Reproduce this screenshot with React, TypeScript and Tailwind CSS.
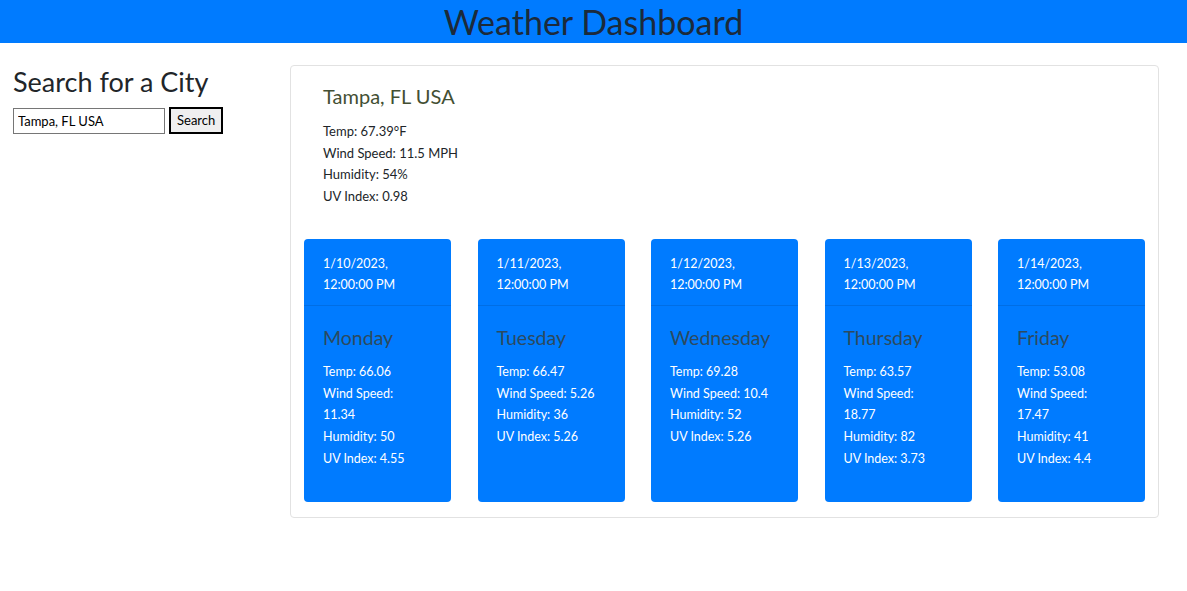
const days = [
  { date: "1/10/2023,", name: "Monday", temp: "66.06", wind: "11.34", hum: "50", uv: "4.55", wrap: true },
  { date: "1/11/2023,", name: "Tuesday", temp: "66.47", wind: "5.26", hum: "36", uv: "5.26", wrap: false },
  { date: "1/12/2023,", name: "Wednesday", temp: "69.28", wind: "10.4", hum: "52", uv: "5.26", wrap: false },
  { date: "1/13/2023,", name: "Thursday", temp: "63.57", wind: "18.77", hum: "82", uv: "3.73", wrap: true },
  { date: "1/14/2023,", name: "Friday", temp: "53.08", wind: "17.47", hum: "41", uv: "4.4", wrap: true },
]

function DayCard({ d }: { d: (typeof days)[number] }) {
  return (
    <div className="flex h-[263px] w-[147px] flex-col rounded bg-[#007bff] text-white">
      <div className="h-[67px] border-b border-black/10 px-[19px] pt-[14px] text-[12.5px] leading-[21.5px]">
        <p>{d.date}</p>
        <p>12:00:00 PM</p>
      </div>
      <div className="px-[19px] pt-[18px] text-[12.5px] leading-[21.7px]">
        <h5 className="mb-[9px] text-[19.5px] leading-[28px] text-[#2c4a60]">{d.name}</h5>
        <p>Temp: {d.temp}</p>
        <p className="whitespace-nowrap">
          Wind Speed:{d.wrap ? <br /> : " "}
          {d.wind}
        </p>
        <p>Humidity: {d.hum}</p>
        <p>UV Index: {d.uv}</p>
      </div>
    </div>
  )
}

export default function App() {
  return (
    <div className="min-h-[591px] bg-white font-['Lato',sans-serif] text-[#212529]">
      <header className="flex h-[43px] items-center justify-center bg-[#007bff]">
        <h1 className="text-[34px] leading-[43px] text-[#1c2a3a]">Weather Dashboard</h1>
      </header>
      <div className="flex pt-[22px]">
        <aside className="w-[290px] pl-[13px]">
          <h3 className="text-[27px] leading-[34px]">Search for a City</h3>
          <div className="mt-[8px] flex items-center gap-[4px]">
            <input
              defaultValue="Tampa, FL USA"
              className="h-[26px] w-[152px] border border-[#767676] px-[4px] text-[13px] text-black"
            />
            <button className="h-[27px] border-2 border-black bg-[#efefef] px-[6px] text-[13px] text-black">
              Search
            </button>
          </div>
        </aside>
        <main className="mr-[28px] flex-1 rounded border border-[#e2e2e2] px-[13px] pb-[15px] pt-[16px]">
          <div className="px-[19px]">
            <h2 className="text-[20px] leading-[28px] text-[#434f33]">Tampa, FL USA</h2>
            <div className="mt-[11px] text-[13px] leading-[21.7px]">
              <p>Temp: 67.39°F</p>
              <p>Wind Speed: 11.5 MPH</p>
              <p>Humidity: 54%</p>
              <p>UV Index: 0.98</p>
            </div>
          </div>
          <div className="mt-[31px] flex justify-between">
            {days.map((d) => (
              <DayCard key={d.name} d={d} />
            ))}
          </div>
        </main>
      </div>
    </div>
  )
}
